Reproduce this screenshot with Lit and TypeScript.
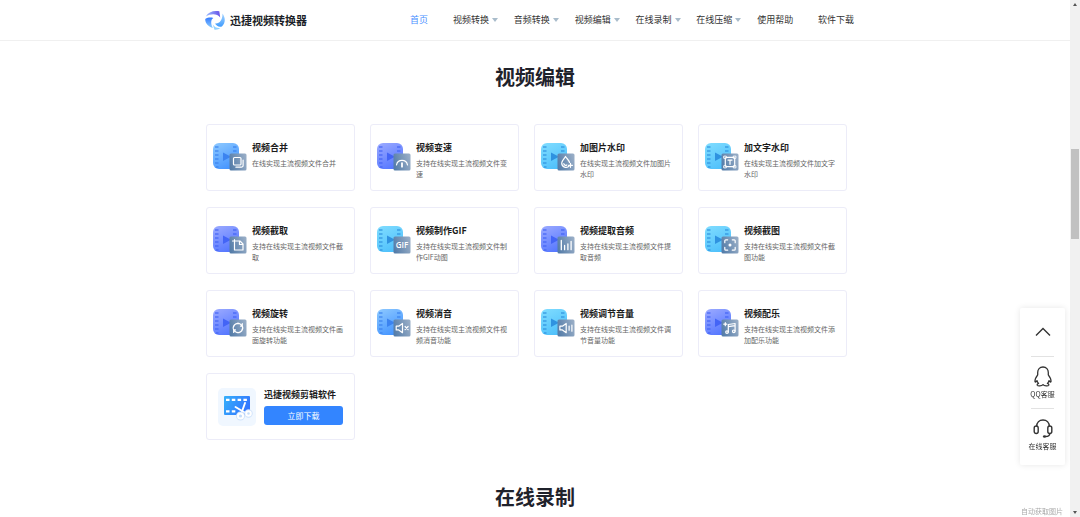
import { LitElement, html, svg, css } from "lit";
import { customElement, property } from "lit/decorators.js";
import { classMap } from "lit/directives/class-map.js";

type Tone = "blue" | "indigo" | "sky";

interface Tool {
  name: string;
  text: string;
  tone: Tone;
  glyph: string;
}

const TONES: Record<Tone, { from: string; to: string; mark: string }> = {
  blue: { from: "#8cc8ff", to: "#4595ff", mark: "#3b83f0" },
  indigo: { from: "#9aa9ff", to: "#5577ff", mark: "#4364f6" },
  sky: { from: "#7fdcff", to: "#4fc0fb", mark: "#2f92e0" },
};

// Badge glyphs, drawn in a 17 x 17 box.
const GLYPHS: Record<string, unknown> = {
  merge: svg`<rect x="4" y="4" width="7.5" height="7.5" rx="1"/><path d="M13.6 6.5v5.4a1.8 1.8 0 0 1-1.8 1.8H6.4"/>`,
  speed: svg`<path d="M3 11.5a5.6 5.6 0 0 1 11 0"/><path d="M8.5 9.6v3.6" stroke-width="1.8"/>`,
  drop: svg`<path d="M11.8 12.3a4.3 4.3 0 0 1-7.6-2.8C4.2 7.2 6.8 5.2 8 3c1.3 2.1 3.7 4 4 6"/><path d="M6.3 10.2a1.9 1.9 0 0 0 3 1.2M13 9.8v4M11 11.8h4"/>`,
  text: svg`<path d="M4.6 3.8h7.8M4.6 13.2h7.8M3.8 4.6v7.8M13.2 4.6v7.8"/><g stroke-width="0.9"><rect x="2.6" y="2.6" width="2.2" height="2.2"/><rect x="12.2" y="2.6" width="2.2" height="2.2"/><rect x="2.6" y="12.2" width="2.2" height="2.2"/><rect x="12.2" y="12.2" width="2.2" height="2.2"/></g><path d="M6.5 6.6h4M8.5 6.6v4.2"/>`,
  crop: svg`<path d="M3 4.5h7.5l3 3v6H5V3"/><path d="M10 4.8v3.2h3.2"/>`,
  gif: svg`<text x="8.5" y="11.3" text-anchor="middle" class="gif">GIF</text>`,
  bars: svg`<path d="M3.8 4v9.2M7.1 9v4.2M10.4 7.5v5.7M13.6 4.8v8.4" stroke-width="1.3"/>`,
  shot: svg`<path d="M3.3 6.2V4.3a1 1 0 0 1 1-1h1.900M10.8 3.3h1.900a1 1 0 0 1 1 1v1.900M13.7 10.8v1.900a1 1 0 0 1-1 1h-1.900M6.2 13.7H4.3a1 1 0 0 1-1-1v-1.900"/><circle cx="8.5" cy="8.5" r="1.5" fill="#fff" stroke="none"/>`,
  rotate: svg`<path d="M4.2 10.400a4.600 4.600 0 0 1 5.500-6.300M12.800 6.600a4.600 4.600 0 0 1-5.500 6.300M6.200 4.600a4.600 4.600 0 0 1 5.600.700M10.800 12.400a4.600 4.600 0 0 1-5.600-.7M12.800 4v2.600h-1.800M4.200 13v-2.600H6"/>`,
  mute: svg`<path d="M2.7 6.7h2.5L9 4v9.2l-3.8-2.8H2.7z"/><path d="m11.6 7 3 3.2M14.6 7l-3 3.2"/>`,
  volume: svg`<path d="M2.4 6.7h2.5L8.7 4v9.2l-3.8-2.8H2.4z"/><path d="M11.6 6.5v4.2M14.4 5.5v6.2"/>`,
  music: svg`<path d="M6.8 12.6V5l6.8-1v7.6M6.8 7.2l6.8-1"/><circle cx="5.5" cy="12.6" r="1.3"/><circle cx="12.3" cy="11.8" r="1.3"/><path d="M3.8 3.2v3M2.3 4.7h3"/>`,
};

const TOOLS: Tool[] = [
  { name: "视频合并", text: "在线实现主流视频文件合并", tone: "blue", glyph: "merge" },
  { name: "视频变速", text: "支持在线实现主流视频文件变速", tone: "indigo", glyph: "speed" },
  { name: "加图片水印", text: "在线实现主流视频文件加图片水印", tone: "sky", glyph: "drop" },
  { name: "加文字水印", text: "在线实现主流视频文件加文字水印", tone: "sky", glyph: "text" },
  { name: "视频截取", text: "支持在线实现主流视频文件截取", tone: "indigo", glyph: "crop" },
  { name: "视频制作GIF", text: "支持在线实现主流视频文件制作GIF动图", tone: "sky", glyph: "gif" },
  { name: "视频提取音频", text: "支持在线实现主流视频文件提取音频", tone: "indigo", glyph: "bars" },
  { name: "视频截图", text: "支持在线实现主流视频文件截图功能", tone: "sky", glyph: "shot" },
  { name: "视频旋转", text: "支持在线实现主流视频文件画面旋转功能", tone: "indigo", glyph: "rotate" },
  { name: "视频消音", text: "支持在线实现主流视频文件视频消音功能", tone: "blue", glyph: "mute" },
  { name: "视频调节音量", text: "支持在线实现主流视频文件调节音量功能", tone: "sky", glyph: "volume" },
  { name: "视频配乐", text: "支持在线实现主流视频文件添加配乐功能", tone: "indigo", glyph: "music" },
];

const NAV = [
  { label: "首页", menu: false },
  { label: "视频转换", menu: true },
  { label: "音频转换", menu: true },
  { label: "视频编辑", menu: true },
  { label: "在线录制", menu: true },
  { label: "在线压缩", menu: true },
  { label: "使用帮助", menu: false },
  { label: "软件下载", menu: false },
];

@customElement("tool-icon")
export class ToolIcon extends LitElement {
  @property() tone: Tone = "blue";
  @property() glyph = "merge";

  static styles = css`
    :host { display: block; }
    svg { display: block; }
    .gif { font: 600 8px "Open Sans", sans-serif; fill: #fff; stroke: none; }
  `;

  render() {
    const t = TONES[this.tone];
    return html`<svg width="34" height="28" viewBox="0 0 34 28" aria-hidden="true">
      <defs>
        <linearGradient id="film" x1="0.1" y1="0" x2="0.6" y2="1">
          <stop offset="0" stop-color=${t.from} /><stop offset="1" stop-color=${t.to} />
        </linearGradient>
        <linearGradient id="badge" x1="0" y1="0.6" x2="1" y2="0.3">
          <stop offset="0" stop-color="#557da9" /><stop offset="1" stop-color="#98adc6" />
        </linearGradient>
      </defs>
      <rect width="26" height="26" rx="6" fill="url(#film)" />
      <path d="M2 4h3.500M2 8h3.500M2 12h3.500M2 16h3.500M2 20h3.500M3 24h2.500M20 4h3.500M20 8h3.500" stroke=${t.mark} stroke-width="1.500" opacity="0.8" />
      <path d="M10 9.5v8.6l8-4.3z" fill=${t.mark} />
      <g transform="translate(16.5 10.5)" fill="none" stroke="#fff" stroke-width="1.2" stroke-linecap="round" stroke-linejoin="round">
        <rect width="17" height="17" rx="1.5" fill="url(#badge)" stroke="none" />
        ${GLYPHS[this.glyph]}
      </g>
    </svg>`;
  }
}

@customElement("app-root")
export class AppRoot extends LitElement {
  static styles = css`
    :host {
      display: grid;
      grid-template-columns: minmax(0, 1fr) 10px;
      height: 100vh;
      overflow: hidden;
      background: #fff;
      color: #222;
      font-family: "Noto Sans CJK SC", sans-serif;
      font-size: 9px;
    }
    * { box-sizing: border-box; }
    svg { display: block; }
    a { color: inherit; text-decoration: none; }
    h2, h3, p { margin: 0; padding: 0; }
    button { font: inherit; border: 0; padding: 0; cursor: pointer; }

    .page { overflow: hidden; }
    .header { border-bottom: 1px solid #f0f0f0; }
    .wrap { width: 100%; max-width: 660px; margin: 0 auto; }
    .bar { display: flex; align-items: center; justify-content: space-between; height: 40px; padding-right: 11px; }
    .logo { display: flex; align-items: center; gap: 5px; font-size: 11px; line-height: 20px; font-weight: bold; color: #1c1f28; }
    .nav { display: grid; grid-template-columns: 43px repeat(6, 1fr) 36px; width: 444px; line-height: 16px; color: #333; }
    .link { display: flex; align-items: center; gap: 3px; white-space: nowrap; }
    .link.current { color: #4a90ff; }
    .caret { border: 3px solid transparent; border-top: 4px solid #a9bccb; border-bottom: 0; }

    .section { padding-top: 22px; }
    .title { font-size: 20px; line-height: 28px; font-weight: bold; text-align: center; color: #1f222b; }
    .section + .section { padding-top: 43px; }
    .cards { display: grid; grid-template-columns: repeat(4, 1fr); gap: 16px 15px; margin-top: 33px; padding: 0 18px 0 1px; }
    .card { display: flex; gap: 5px; height: 67px; border: 1px solid #ececf8; border-radius: 3px; padding: 16px 3px 0 6px; }
    .card tool-icon { margin-top: 2px; }
    .name { font-size: 9px; line-height: 14px; font-weight: bold; color: #1c1c1c; }
    .text { margin-top: 3px; max-width: 97px; font-size: 7px; line-height: 11px; color: #666; }
    .card.soft { gap: 8px; padding: 14px 11px 0 11px; }
    .soft .info { flex: 1; }
    .download { display: block; width: 100%; height: 19px; margin-top: 4px; border-radius: 3px; background: #3385ff; color: #fff; font-size: 8px; line-height: 19px; }

    .side { position: fixed; right: 15px; bottom: 52px; width: 45px; padding: 0 11px 5px; background: #fff; border-radius: 2px; box-shadow: 0 0 6px rgba(0, 0, 0, 0.1); }
    .side button { display: flex; flex-direction: column; align-items: center; justify-content: flex-start; gap: 2px; width: 100%; height: 52px; padding-top: 9px; background: none; color: #333; font-size: 7px; line-height: 10px; white-space: nowrap; border-top: 1px solid #e2e2e2; }
    .side .top { height: 48px; justify-content: center; padding-top: 0; border-top: 0; }
    .note { position: fixed; right: 17px; bottom: 1px; font-size: 7px; line-height: 10px; color: #aaa; }

    .scroll { display: grid; grid-template-rows: 9px 140fr 90fr 269fr 9px; justify-items: center; background: #f1f1f1; }
    .thumb { grid-row: 3; width: 8px; background: #c1c1c1; }
    .up, .down { align-self: center; border: 2px solid transparent; }
    .up { border-bottom: 3px solid #555; border-top: 0; }
    .down { grid-row: 5; border-top: 3px solid #555; border-bottom: 0; }
  `;

  private logo() {
    return html`<svg width="20" height="20" viewBox="0 0 20 20" aria-hidden="true">
      <defs>
        <linearGradient id="p" x1="0" x2="1"><stop stop-color="#9cc0ff" /><stop offset="1" stop-color="#6650e8" /></linearGradient>
        <linearGradient id="b" x1="0" x2="0" y1="0" y2="1"><stop stop-color="#3379ff" /><stop offset="1" stop-color="#8ed0ff" /></linearGradient>
        <linearGradient id="c" x1="0" x2="0" y1="0" y2="1"><stop stop-color="#a9d6ff" /><stop offset="1" stop-color="#3f9cff" /></linearGradient>
      </defs>
      <path d="M.8 6.500C3.200 2 8.500 .2 14.300 1.300l.9 6.200C12.300 3.800 6.500 3.200.8 6.500z" fill="url(#p)" />
      <path d="M.2 9C2.800 7.300 5.600 7.100 8.300 7.900 5.800 9.200 5.400 13.700 8 18 3.500 16.900.2 13.500.2 9z" fill="url(#b)" />
      <path d="M17.400 3.500c3.400 4.300 3 9.600-.5 12.900-2.900.8-5.500-.3-6.900-2.900 4.900.6 7.700-4 7.400-10z" fill="url(#c)" />
      <path d="M7.700 14.500c2.100 3.200 5.200 3.900 8 3.300-1.700 1.500-3.900 2.200-6.200 1.900z" fill="#93d2ff" />
    </svg>`;
  }

  private softIcon() {
    return html`<svg width="38" height="38" viewBox="0 0 38 38" aria-hidden="true">
      <defs><linearGradient id="s" x1="0" x2="1" y2="0.4"><stop stop-color="#35b0fa" /><stop offset="1" stop-color="#3377ff" /></linearGradient></defs>
      <rect width="38" height="38" rx="5" fill="#f0f7ff" />
      <rect x="6" y="8" width="26" height="19" rx="1" fill="url(#s)" />
      <path d="M8 11.8h22M8 23.3h10" stroke="#fff" stroke-width="2.2" stroke-dasharray="3.5 2.3" />
      <g fill="none" stroke="#fff" stroke-width="1.9" stroke-linecap="round"><path d="m17.5 19 10 6M27 15l-3.5 10" /></g>
      <g fill="none" stroke="#cfe2fb" stroke-width="3.4"><circle cx="22.5" cy="28" r="2.8" /><circle cx="30.5" cy="25.5" r="2.5" /></g>
      <g fill="#c4dcfa" stroke="#fff" stroke-width="2"><circle cx="22.5" cy="28" r="2.6" /><circle cx="30.5" cy="25.5" r="2.3" /></g>
    </svg>`;
  }

  render() {
    return html`
      <div class="page">
        <header class="header">
          <div class="wrap bar">
            <a class="logo" href="#">${this.logo()}<span>迅捷视频转换器</span></a>
            <nav class="nav">
              ${NAV.map(
                (n, i) => html`<a href="#" class=${classMap({ link: true, current: i === 0 })}>${n.label}${n.menu ? html`<span class="caret"></span>` : ""}</a>`
              )}
            </nav>
          </div>
        </header>
        <main>
          <section class="section">
            <h2 class="title">视频编辑</h2>
            <div class="wrap cards">
              ${TOOLS.map(
                (t) => html`<a class="card" href="#">
                  <tool-icon tone=${t.tone} glyph=${t.glyph}></tool-icon>
                  <div><h3 class="name">${t.name}</h3><p class="text">${t.text}</p></div>
                </a>`
              )}
              <div class="card soft">
                ${this.softIcon()}
                <div class="info"><h3 class="name">迅捷视频剪辑软件</h3><button class="download">立即下载</button></div>
              </div>
            </div>
          </section>
          <section class="section"><h2 class="title">在线录制</h2></section>
        </main>
      </div>
      <div class="scroll"><span class="up"></span><span class="thumb"></span><span class="down"></span></div>
      <aside class="side">
        <button class="top" aria-label="返回顶部">
          <svg width="16" height="10" viewBox="0 0 16 10" fill="none" stroke="#333" stroke-width="1.4"><path d="m1 8.5 7-7 7 7" /></svg>
        </button>
        <button>
          <svg width="18" height="21" viewBox="0 0 18 21" fill="none" stroke="#333" stroke-width="1.3" stroke-linejoin="round"><path d="M9 1C5.6 1 3.7 3.5 3.7 6.5v2.3C2.2 10.8.8 13 1 15.5c.2 1 1.2.3 2-.9.3 1.2.8 2.1 1.6 2.8-1.2.5-1.6 1.1-1.3 1.8.5 1 4.3 1 5.7-.6 1.4 1.6 5.2 1.6 5.7.6.3-.7-.1-1.3-1.3-1.8.8-.7 1.3-1.6 1.6-2.8.8 1.2 1.8 1.900 2 .900.2-2.500-1.200-4.700-2.700-6.700V6.500C14.300 3.500 12.400 1 9 1z" /></svg>
          <span>QQ客服</span>
        </button>
        <button>
          <svg width="20" height="21" viewBox="0 0 20 21" fill="none" stroke="#333" stroke-width="1.4"><path d="M3.7 8.5C3.7 4.5 6.3 2 10 2s6.3 2.5 6.3 6.5" /><rect x="1.2" y="8" width="4" height="7.5" rx="2" /><rect x="14.8" y="8" width="4" height="7.5" rx="2" /><path d="M16.8 15.5c0 1.8-1.8 3-4.3 3" /><ellipse cx="11.5" cy="18.5" rx="1.6" ry="1.2" fill="#333" stroke="none" /></svg>
          <span>在线客服</span>
        </button>
      </aside>
      <div class="note">自动获取图片</div>
    `;
  }
}
